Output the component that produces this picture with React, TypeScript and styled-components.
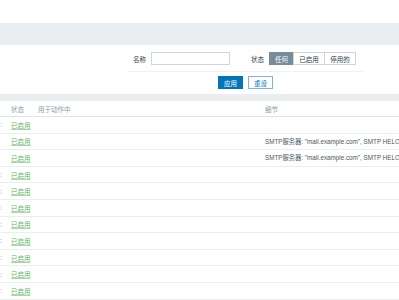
import React from "react";
import styled, { createGlobalStyle } from "styled-components";

const Global = createGlobalStyle`
  html, body { margin: 0; padding: 0; background: #ffffff; }
  body {
    font-family: "Liberation Sans", Arial, "Noto Sans CJK SC", sans-serif;
    font-size: 6.5px;
    color: #1f2c33;
  }
  * { box-sizing: border-box; }
`;

const Page = styled.div`
  width: 399px;
  height: 300px;
  overflow: hidden;
  background: #ffffff;
`;

const TopSpace = styled.div`
  height: 23px;
`;

const Band = styled.div<{ $h: number }>`
  height: ${(p) => p.$h}px;
  background: #ebeef0;
`;

const FilterPanel = styled.div`
  height: 49px;
  padding-top: 7px;
`;

const FilterInner = styled.div`
  margin-left: 128px;
  width: 235px;
`;

const FilterRow = styled.div`
  display: flex;
  align-items: center;
  padding: 0 0 6px 5px;
  border-bottom: 1px solid #f0f2f4;
  height: 20px;
`;

const Label = styled.span<{ $ml?: number }>`
  margin-left: ${(p) => p.$ml ?? 0}px;
  margin-right: 5px;
  color: #2f3d44;
  white-space: nowrap;
`;

const TextInput = styled.div`
  width: 79px;
  height: 13px;
  border: 1px solid #cfd6db;
  background: #ffffff;
`;

const Segmented = styled.div`
  display: flex;
  height: 13px;
`;

const Segment = styled.div<{ $w: number; $active?: boolean }>`
  width: ${(p) => p.$w}px;
  display: flex;
  align-items: center;
  justify-content: center;
  border: 1px solid ${(p) => (p.$active ? "#768d99" : "#cfd6db")};
  margin-left: -1px;
  background: ${(p) => (p.$active ? "#768d99" : "#ffffff")};
  color: ${(p) => (p.$active ? "#ffffff" : "#2f3d44")};
  &:first-child { margin-left: 0; }
`;

const ButtonRow = styled.div`
  display: flex;
  justify-content: center;
  gap: 5px;
  margin-top: 4px;
`;

const Button = styled.div<{ $primary?: boolean }>`
  width: 25px;
  height: 13px;
  display: flex;
  align-items: center;
  justify-content: center;
  border: 1px solid ${(p) => (p.$primary ? "#0275b8" : "#7fb5dc")};
  background: ${(p) => (p.$primary ? "#0275b8" : "#ffffff")};
  color: ${(p) => (p.$primary ? "#ffffff" : "#0275b8")};
`;

const Row = styled.div<{ $header?: boolean }>`
  display: grid;
  grid-template-columns: 11px 27px 227px 1fr;
  align-items: center;
  height: ${(p) => (p.$header ? 16 : 16.6)}px;
  border-bottom: 1px solid ${(p) => (p.$header ? "#dfe4e7" : "#ebeef0")};
  color: ${(p) => (p.$header ? "#8a9ba4" : "#1f2c33")};
  white-space: nowrap;
`;

const NameCell = styled.div`
  display: flex;
  justify-content: flex-end;
  overflow: hidden;
  width: 2px;
  color: #8796c8;
`;

const Status = styled.span`
  color: #5cb85c;
  text-decoration: underline;
  text-decoration-color: #a6d9a6;
  text-underline-offset: 1px;
`;

const Detail = styled.div`
  overflow: hidden;
  font-size: 6.3px;
  color: #4a585f;
`;

type Item = { name: string; detail: string };

const smtp = 'SMTP服务器: "mail.example.com", SMTP HELO: "example.com", SMTP电邮: "zabbix@example.com"';

const items: Item[] = [
  { name: "Brevis.one:", detail: "" },
  { name: "", detail: smtp },
  { name: "", detail: smtp },
  { name: "Discord:", detail: "" },
  { name: "Express.ms:", detail: "" },
  { name: "Github:", detail: "" },
  { name: "GLPi:", detail: "" },
  { name: "iLert:", detail: "" },
  { name: "iTop:", detail: "" },
  { name: "Jira:", detail: "" },
  { name: "Line:", detail: "" },
];

export default function App() {
  return (
    <Page>
      <Global />
      <TopSpace />
      <Band $h={22} />
      <FilterPanel>
        <FilterInner>
          <FilterRow>
            <Label>名称</Label>
            <TextInput />
            <Label $ml={21}>状态</Label>
            <Segmented>
              <Segment $w={25} $active>任何</Segment>
              <Segment $w={32}>已启用</Segment>
              <Segment $w={32}>停用的</Segment>
            </Segmented>
          </FilterRow>
          <ButtonRow>
            <Button $primary>应用</Button>
            <Button>重设</Button>
          </ButtonRow>
        </FilterInner>
      </FilterPanel>
      <Band $h={7} />
      <Row $header>
        <div />
        <div>状态</div>
        <div>用于动作中</div>
        <div>细节</div>
      </Row>
      {items.map((it, i) => (
        <Row key={i}>
          <NameCell>
            <span>{it.name}</span>
          </NameCell>
          <div>
            <Status>已启用</Status>
          </div>
          <div />
          <Detail>{it.detail}</Detail>
        </Row>
      ))}
    </Page>
  );
}
